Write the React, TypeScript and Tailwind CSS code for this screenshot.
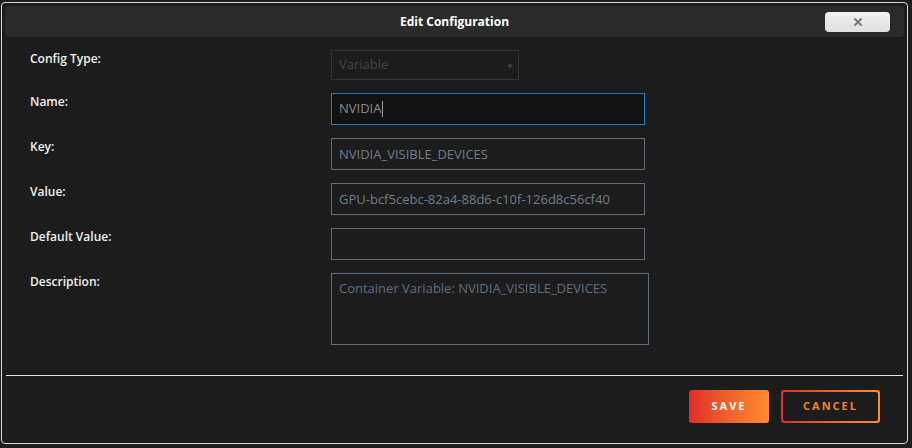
import { X } from 'lucide-react';

const font = { fontFamily: '"Open Sans", "Noto Sans", sans-serif' };

function Row({ label, children }: { label: string; children: React.ReactNode }) {
  return (
    <div className="flex items-start">
      <label className="w-[301px] text-[12px] font-semibold text-[#f0f0f0]">{label}</label>
      {children}
    </div>
  );
}

export default function App() {
  const inputCls =
    'w-[314px] h-[32px] border border-[#5d6b7a] bg-transparent px-[7px] text-[13px] text-[#6f7c8a] outline-none';

  return (
    <div className="w-[912px] h-[448px] bg-[#3c3c3c] overflow-hidden" style={font}>
      <div className="h-[448px] bg-[#1e1e1e] pt-[2px] pl-[1px]">
        <div className="w-[907px] h-[442px] rounded-[4px] border border-[#d9d9d9] bg-[#1c1c1c] p-[3px] flex flex-col">
          {/* Title bar */}
          <div className="relative h-[31px] rounded-[4px] bg-[#2a2a2a] flex items-center justify-center">
            <span className="text-[12px] font-bold text-white">Edit Configuration</span>
            <button className="absolute right-[14px] top-[6px] w-[65px] h-[20px] rounded-[4px] bg-gradient-to-b from-[#f2f2f2] to-[#e0e0e0] flex items-center justify-center">
              <X size={12} strokeWidth={4} className="text-[#7a7a7a]" />
            </button>
          </div>

          {/* Form */}
          <div className="flex flex-col gap-[13px] pl-[25px] pt-[13px]">
            <Row label="Config Type:">
              <div className="relative w-[188px] h-[30px] border border-[#333333] flex items-center px-[7px] text-[13px] text-[#444444]">
                Variable
                <span className="absolute right-[4px] top-[9px] text-[8px] text-[#444444]">▼</span>
              </div>
            </Row>
            <Row label="Name:">
              <div className="w-[314px] h-[32px] border border-[#1f7bd0] bg-[#121212] px-[7px] flex items-center text-[13px] text-[#8a8a8a]">
                NVIDIA<span className="w-[1px] h-[16px] bg-[#9a9a9a] ml-[1px]" />
              </div>
            </Row>
            <Row label="Key:">
              <input className={inputCls} defaultValue="NVIDIA_VISIBLE_DEVICES" />
            </Row>
            <Row label="Value:">
              <input className={inputCls} defaultValue="GPU-bcf5cebc-82a4-88d6-c10f-126d8c56cf40" />
            </Row>
            <Row label="Default Value:">
              <input className={inputCls} defaultValue="" />
            </Row>
            <Row label="Description:">
              <textarea
                className="w-[318px] h-[72px] resize-none border border-[#5d6b7a] bg-transparent px-[7px] py-[5px] text-[13px] text-[#5f6d7c] outline-none"
                defaultValue="Container Variable: NVIDIA_VISIBLE_DEVICES"
              />
            </Row>
          </div>

          <div className="mt-[30px] mx-[1px] h-[1px] bg-[#e6e6e6]" />

          <div className="flex justify-end gap-[12px] pr-[24px] pt-[14px]">
            <button className="w-[80px] h-[33px] rounded-[3px] bg-gradient-to-r from-[#e22828] to-[#ff8c2f] text-[11px] font-bold tracking-[2px] text-white">
              SAVE
            </button>
            <button className="w-[99px] h-[33px] rounded-[3px] p-[2px] bg-gradient-to-r from-[#e22828] to-[#ff8c2f]">
              <span className="flex h-full w-full items-center justify-center rounded-[2px] bg-[#1c1c1c] text-[11px] font-bold tracking-[2px] text-[#f2832a]">
                CANCEL
              </span>
            </button>
          </div>
        </div>
      </div>
    </div>
  );
}
